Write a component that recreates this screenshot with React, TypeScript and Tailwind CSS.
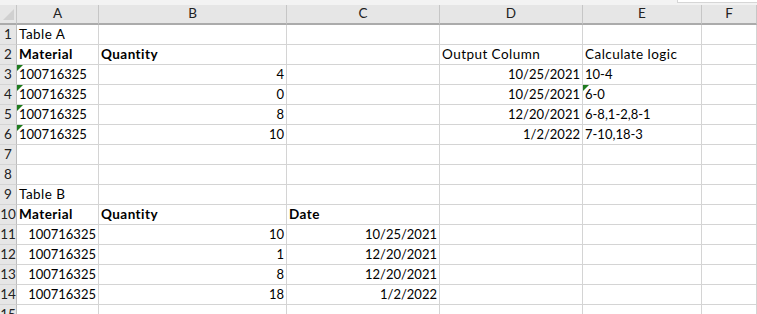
import React from "react";

type Cell = { t?: string; b?: boolean; r?: boolean; tri?: boolean };

const cols = ["A", "B", "C", "D", "E", "F"];

const rows: Cell[][] = [
  [{ t: "Table A" }, {}, {}, {}, {}, {}],
  [{ t: "Material", b: true }, { t: "Quantity", b: true }, {}, { t: "Output Column" }, { t: "Calculate logic" }, {}],
  [{ t: "100716325", tri: true }, { t: "4", r: true }, {}, { t: "10/25/2021", r: true }, { t: "10-4" }, {}],
  [{ t: "100716325", tri: true }, { t: "0", r: true }, {}, { t: "10/25/2021", r: true }, { t: "6-0", tri: true }, {}],
  [{ t: "100716325", tri: true }, { t: "8", r: true }, {}, { t: "12/20/2021", r: true }, { t: "6-8,1-2,8-1" }, {}],
  [{ t: "100716325", tri: true }, { t: "10", r: true }, {}, { t: "1/2/2022", r: true }, { t: "7-10,18-3" }, {}],
  [{}, {}, {}, {}, {}, {}],
  [{}, {}, {}, {}, {}, {}],
  [{ t: "Table B" }, {}, {}, {}, {}, {}],
  [{ t: "Material", b: true }, { t: "Quantity", b: true }, { t: "Date", b: true }, {}, {}, {}],
  [{ t: "100716325", r: true }, { t: "10", r: true }, { t: "10/25/2021", r: true }, {}, {}, {}],
  [{ t: "100716325", r: true }, { t: "1", r: true }, { t: "12/20/2021", r: true }, {}, {}, {}],
  [{ t: "100716325", r: true }, { t: "8", r: true }, { t: "12/20/2021", r: true }, {}, {}, {}],
  [{ t: "100716325", r: true }, { t: "18", r: true }, { t: "1/2/2022", r: true }, {}, {}, {}],
  [{}, {}, {}, {}, {}, {}],
];

export default function App() {
  return (
    <div
      className="w-[757px] h-[314px] overflow-hidden bg-white text-black relative"
      style={{ fontFamily: "Lato, 'Open Sans', sans-serif" }}
    >
      {/* top strip */}
      <div className="h-[5px] bg-[#f3f3f3] flex">
        <div className="flex-1" />
        <div className="w-[80px] h-[3px] bg-white border-l border-b border-[#d6d6d6]" />
      </div>
      <div className="grid grid-cols-[17px_82px_188px_153px_143px_119px_1fr] text-[13px] leading-none">
        {/* header row */}
        <div className="h-[20px] bg-[#e6e6e6] border-r border-b-2 border-r-[#c6c6c6] border-b-[#ababab] relative">
          <div className="absolute right-[2px] bottom-[3px] w-0 h-0 border-l-[11px] border-l-transparent border-b-[11px] border-b-[#d0d0d0]" />
        </div>
        {cols.map((c) => (
          <div
            key={c}
            className="h-[20px] bg-[#e6e6e6] border-r border-b-2 border-r-[#c6c6c6] border-b-[#ababab] flex items-center justify-center text-[#222] text-[13.5px]"
          >
            {c}
          </div>
        ))}
        {rows.map((row, i) => (
          <React.Fragment key={i}>
            <div className="h-[20px] bg-[#e6e6e6] border-r border-b border-r-[#bdbdbd] border-b-[#d4d4d4] flex items-end justify-center pb-[3px] text-[#222] text-[13.5px]">
              {i + 1}
            </div>
            {row.map((c, j) => (
              <div
                key={j}
                className={
                  "h-[20px] border-r border-b border-[#d4d4d4] relative flex items-end pb-[3px] px-[2px] whitespace-nowrap " +
                  (c.r ? "justify-end" : "justify-start") +
                  (c.b ? " font-bold" : "") +
                  (c.t && /[a-z]/i.test(c.t) ? " tracking-[0.45px] text-[13.5px]" : "")
                }
              >
                {c.tri && (
                  <div className="absolute left-0 top-0 w-0 h-0 border-t-[6px] border-t-[#1e7b1e] border-r-[6px] border-r-transparent" />
                )}
                {c.t}
              </div>
            ))}
          </React.Fragment>
        ))}
      </div>
    </div>
  );
}
